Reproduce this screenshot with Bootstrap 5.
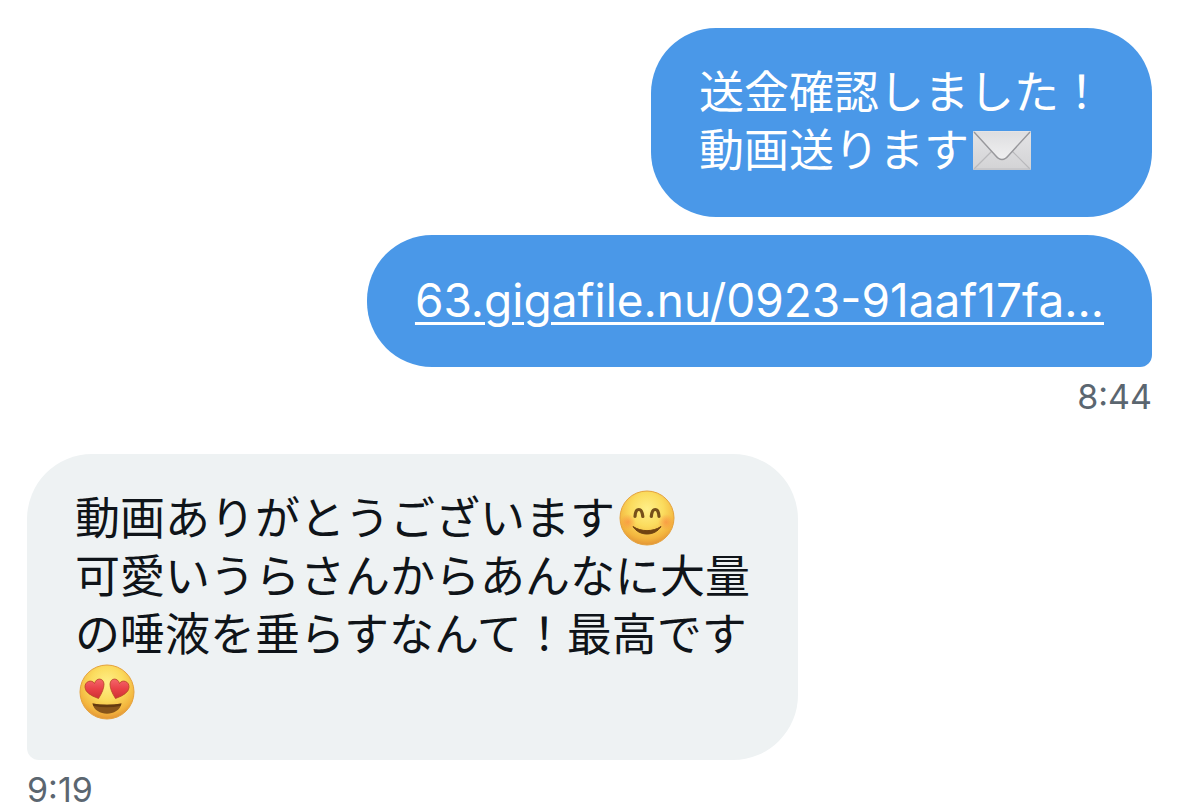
<!DOCTYPE html>
<html lang="ja">
<head>
<meta charset="utf-8">
<meta name="viewport" content="width=device-width, initial-scale=1">
<title>メッセージ</title>
<link href="https://cdn.jsdelivr.net/npm/bootstrap@5.3.0/dist/css/bootstrap.min.css" rel="stylesheet">
<style>
body { background: #fff; color: #0f1419; }
.thread { padding: 28px 27px 0; font-family: Inter, "Noto Sans CJK JP", sans-serif; }
.outgoing { gap: 18px; }
.incoming { margin-top: 37px; }
.bubble { padding: 36px 48px 37px; border-radius: 65px; font-size: 45px; line-height: 58px; max-width: 100%; overflow-wrap: anywhere; }
.bubble-out { background: #4a98e8; color: #fff; }
.bubble-in { background: #eef2f3; padding-bottom: 38px; }
.bubble-in p { max-width: 15em; }
.tail-end { border-bottom-right-radius: 12px; }
.tail-start { border-bottom-left-radius: 12px; }
.bubble a { color: #fff; font-size: 46px; text-decoration-thickness: 3px; text-underline-offset: 5px; }
.stamp { color: #5b6670; font-size: 34px; line-height: 40px; margin-top: 10px; }
.emoji { width: 56px; height: 56px; margin: -8px 4px; vertical-align: -3px; }
.emoji-mail { width: 58px; height: 40px; vertical-align: 5px; }
</style>
</head>
<body>
<main class="thread d-flex flex-column">
  <section>
    <div class="outgoing d-flex flex-column align-items-end">
      <div class="bubble bubble-out">
        <p class="m-0">送金確認しました！<br>動画送ります<svg class="emoji emoji-mail" viewBox="0 0 58 40" role="img" aria-label="封筒">
          <defs>
            <linearGradient id="paper" x1="0" y1="0" x2="0" y2="1"><stop offset="0" stop-color="#e4e4e6"/><stop offset="1" stop-color="#d3d3d5"/></linearGradient>
            <linearGradient id="flap" x1="0" y1="0" x2="0" y2="1"><stop offset="0" stop-color="#dedee0"/><stop offset="1" stop-color="#f0f0f1"/></linearGradient>
          </defs>
          <rect x="0" y="1" width="58" height="39" rx="1" fill="url(#paper)"/>
          <path d="M1 39 20 20M57 39 38 20" stroke="#b9b9bc" stroke-width="1.2"/>
          <path d="M1 39H57" stroke="#bcbcc0"/>
          <path d="M1 2 22 25Q29 34 36 25L57 2Z" fill="url(#flap)"/>
          <path d="M1 2 22 25Q29 34 36 25L57 2" fill="none" stroke="#98989c" stroke-width="1.4"/>
        </svg></p>
      </div>
      <div class="bubble bubble-out tail-end">
        <p class="m-0"><a href="#">63.gigafile.nu/0923-91aaf17fa...</a></p>
      </div>
    </div>
    <time class="stamp d-block text-end">8:44</time>
  </section>
  <section class="incoming d-flex flex-column align-items-start">
    <div class="bubble bubble-in tail-start">
      <p class="m-0">動画ありがとうございます<svg class="emoji" viewBox="0 0 56 56" role="img" aria-label="笑顔">
        <defs>
          <radialGradient id="face" cx=".5" cy=".34" r=".68"><stop offset="0" stop-color="#fff08a"/><stop offset=".45" stop-color="#fbdc5e"/><stop offset=".8" stop-color="#f3b53e"/><stop offset="1" stop-color="#e08f34"/></radialGradient>
          <radialGradient id="blush"><stop offset="0" stop-color="#fb7a3c" stop-opacity=".55"/><stop offset="1" stop-color="#fb7a3c" stop-opacity="0"/></radialGradient>
        </defs>
        <circle cx="28" cy="28" r="27" fill="url(#face)" stroke="#e5a23c"/>
        <circle cx="9" cy="32" r="8" fill="url(#blush)"/><circle cx="47" cy="32" r="8" fill="url(#blush)"/>
        <path d="M16 26.500Q16.500 19.500 19.800 19.500Q23 19.500 23.800 26.500M32.300 26.500Q33 19.500 36.200 19.500Q39.500 19.500 40 26.500" fill="none" stroke="#76501a" stroke-width="3.2" stroke-linecap="round"/>
        <path d="M14 36.500C22 42 34 42 42 36.500C36 46.500 20 46.500 14 36.500Z" fill="#714311" stroke="#714311" stroke-linejoin="round"/>
      </svg><br>可愛いうらさんからあんなに大量の唾液を垂らすなんて！最高です<svg class="emoji" viewBox="0 0 56 56" role="img" aria-label="ハートの目の笑顔">
        <defs>
          <linearGradient id="heart" x1="0" y1="0" x2="0" y2="1"><stop offset="0" stop-color="#f4666b"/><stop offset=".5" stop-color="#e94148"/><stop offset="1" stop-color="#cf3034"/></linearGradient>
        </defs>
        <circle cx="28" cy="28" r="27" fill="url(#face)" stroke="#e5a23c"/>
        <g fill="url(#heart)" stroke="#b64325" stroke-width=".8">
          <path d="M19.500 34.500Q6.500 30 6 23.500C5.500 17 13 15 15.500 19.500C17 13.500 24.500 13.500 25 20Q25 26 19.500 34.500Z"/>
          <path d="M36.500 34.500Q49.500 30 50 23.500C50.500 17 43 15 40.500 19.500C39 13.500 31.500 13.500 31 20Q31 26 36.500 34.500Z"/>
        </g>
        <path d="M13.500 39.500Q28 42 42.500 39.500C40 53 16 53 13.500 39.500Z" fill="#87541a"/>
        <path d="M13.500 39.500Q28 42 42.500 39.500L41.500 42Q28 44.500 14.500 42Z" fill="#643a10"/>
      </svg></p>
    </div>
    <time class="stamp">9:19</time>
  </section>
</main>
<script src="https://cdn.jsdelivr.net/npm/bootstrap@5.3.0/dist/js/bootstrap.bundle.min.js"></script>
</body>
</html>
